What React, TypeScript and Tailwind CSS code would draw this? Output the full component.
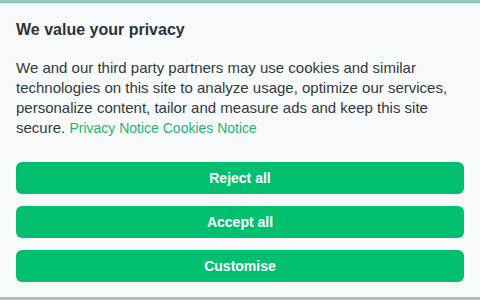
import React from "react"

export default function App() {
  return (
    <main className="h-[300px] w-[480px] overflow-hidden bg-[#b4bcb6] pt-[2px] font-['Liberation_Sans',Arial,sans-serif]">
      <div className="flex h-[295px] flex-col border-t border-[#5ed3ae] bg-[#f7f9fa] px-4 pt-[15px]">
        <h2 className="text-base font-bold leading-6 text-[#2d3338]">We value your privacy</h2>
        <p className="mt-4 text-[15px] leading-5 text-[#333a40]">
          We and our third party partners may use cookies and similar technologies on this site to analyze usage,
          optimize our services, personalize content, tailor and measure ads and keep this site secure.{" "}
          <span className="text-[14px] text-[#1cb86f]">
            <a href="#">Privacy Notice</a> <a href="#">Cookies Notice</a>
          </span>
        </p>
        {/* Actions */}
        <div className="mt-6 flex flex-col gap-3">
          {["Reject all", "Accept all", "Customise"].map((label) => (
            <button
              key={label}
              className="h-8 w-full rounded-md bg-[#00bf6f] text-sm font-bold text-white"
            >
              {label}
            </button>
          ))}
        </div>
      </div>
    </main>
  )
}
